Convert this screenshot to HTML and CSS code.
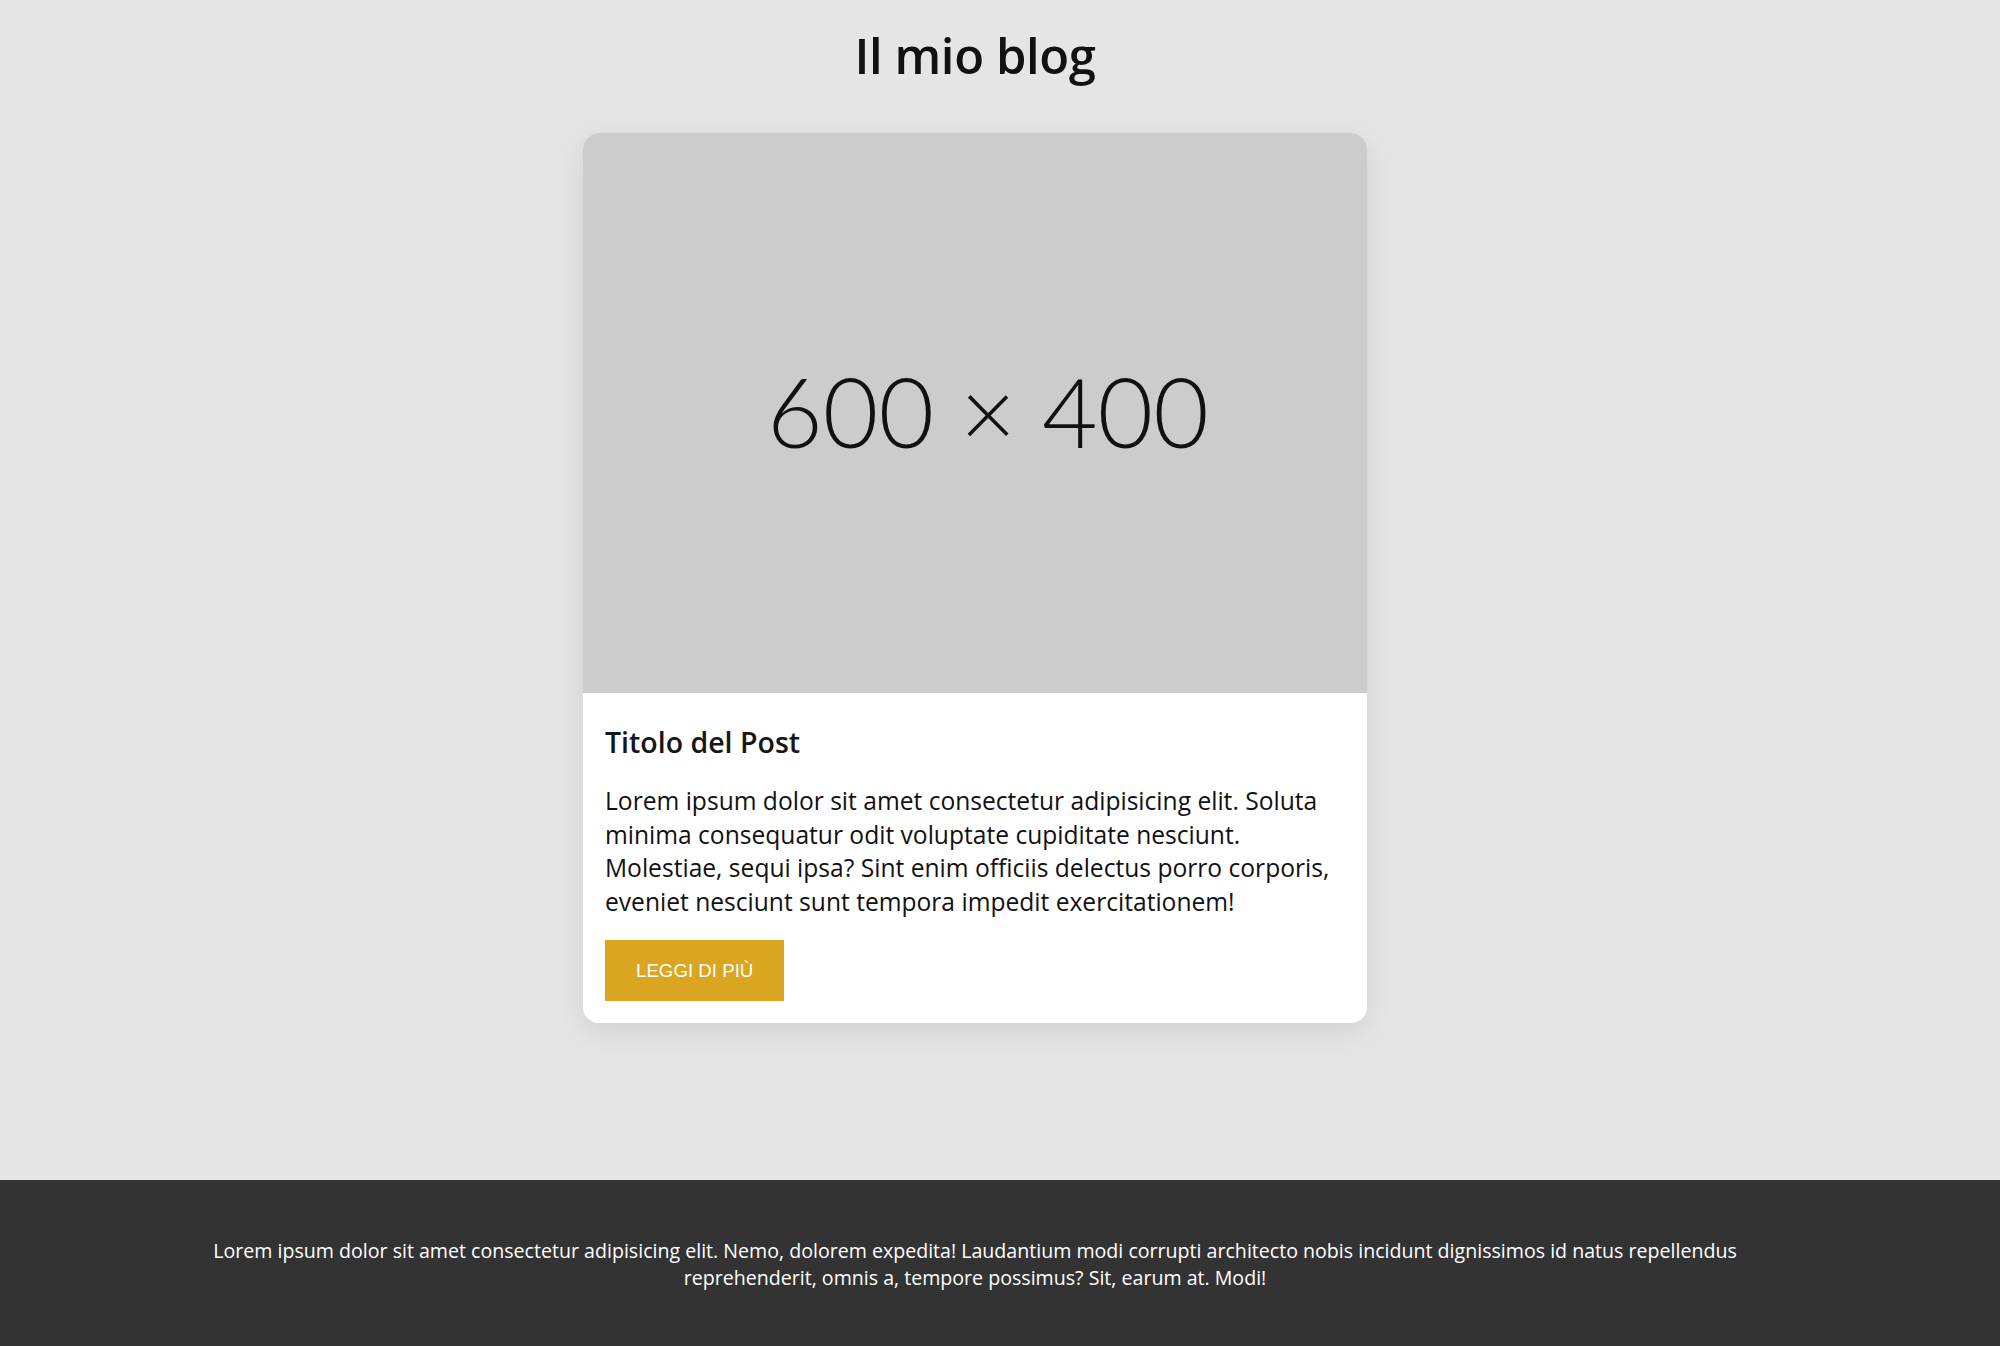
FILE: index.html
```html
<!DOCTYPE html>
<html lang="it">
<head>
<meta charset="utf-8">
<title>Il mio blog</title>
<link rel="stylesheet" href="styles.css">
</head>
<body>
  <main class="main">
    <h1 class="site-title">Il mio blog</h1>
    <article class="card">
      <div class="card-image"><span class="card-image-label">600 × 400</span></div>
      <div class="card-body">
        <h2 class="card-title">Titolo del Post</h2>
        <p class="card-text">Lorem ipsum dolor sit amet consectetur adipisicing elit. Soluta minima consequatur odit voluptate cupiditate nesciunt. Molestiae, sequi ipsa? Sint enim officiis delectus porro corporis, eveniet nesciunt sunt tempora impedit exercitationem!</p>
        <a class="btn" href="#">LEGGI DI PIÙ</a>
      </div>
    </article>
  </main>
  <footer class="footer">
    <div class="footer-inner">
      <p class="footer-text">Lorem ipsum dolor sit amet consectetur adipisicing elit. Nemo, dolorem expedita! Laudantium modi corrupti architecto nobis incidunt dignissimos id natus repellendus reprehenderit, omnis a, tempore possimus? Sit, earum at. Modi!</p>
    </div>
  </footer>
</body>
</html>
```
FILE: styles.css
```css
* { box-sizing: border-box; }

html, body { margin: 0; padding: 0; }

body {
  background: #e5e5e5;
  font-family: "Open Sans", "Liberation Sans", sans-serif;
  color: #111;
  min-height: 100vh;
  display: flex;
  flex-direction: column;
}

.main {
  flex: 1;
  width: 1950px;
  padding-top: 21px;
  display: flex;
  flex-direction: column;
  align-items: center;
}

.site-title {
  margin: 0 0 44px;
  font-size: 49px;
  font-weight: 600;
  line-height: 68px;
  letter-spacing: -0.4px;
  color: #111;
}

.card {
  width: 784px;
  background: #fff;
  border-radius: 16px;
  overflow: hidden;
  box-shadow: 0 8px 28px rgba(0, 0, 0, 0.09);
}

.card-image {
  height: 560px;
  background: #cccccc;
  display: flex;
  align-items: center;
  justify-content: center;
  padding-left: 26px;
  padding-bottom: 6px;
}

.card-image-label {
  font-family: Lato, "Open Sans", sans-serif;
  font-weight: 300;
  font-size: 96px;
  color: #111;
}

.card-body {
  padding: 30px 22px 22px;
}

.card-title {
  margin: 0 0 22px;
  font-size: 28.5px;
  font-weight: 600;
  line-height: 39px;
  letter-spacing: 0;
  color: #161616;
}

.card-text {
  margin: 0 0 22px;
  font-size: 24.6px;
  line-height: 33.6px;
  color: #111;
}

.btn {
  display: inline-block;
  background: #daa520;
  color: #fff;
  text-decoration: none;
  font-family: "Liberation Sans", Arial, sans-serif;
  font-size: 18.7px;
  line-height: 21px;
  padding: 20px 31px;
}

.footer {
  background: #333333;
  color: #fff;
}

.footer-inner {
  width: 1950px;
  padding: 57px 180px 55px;
}

.footer-text {
  margin: 0;
  text-align: center;
  font-size: 19.6px;
  line-height: 27px;
}
```
